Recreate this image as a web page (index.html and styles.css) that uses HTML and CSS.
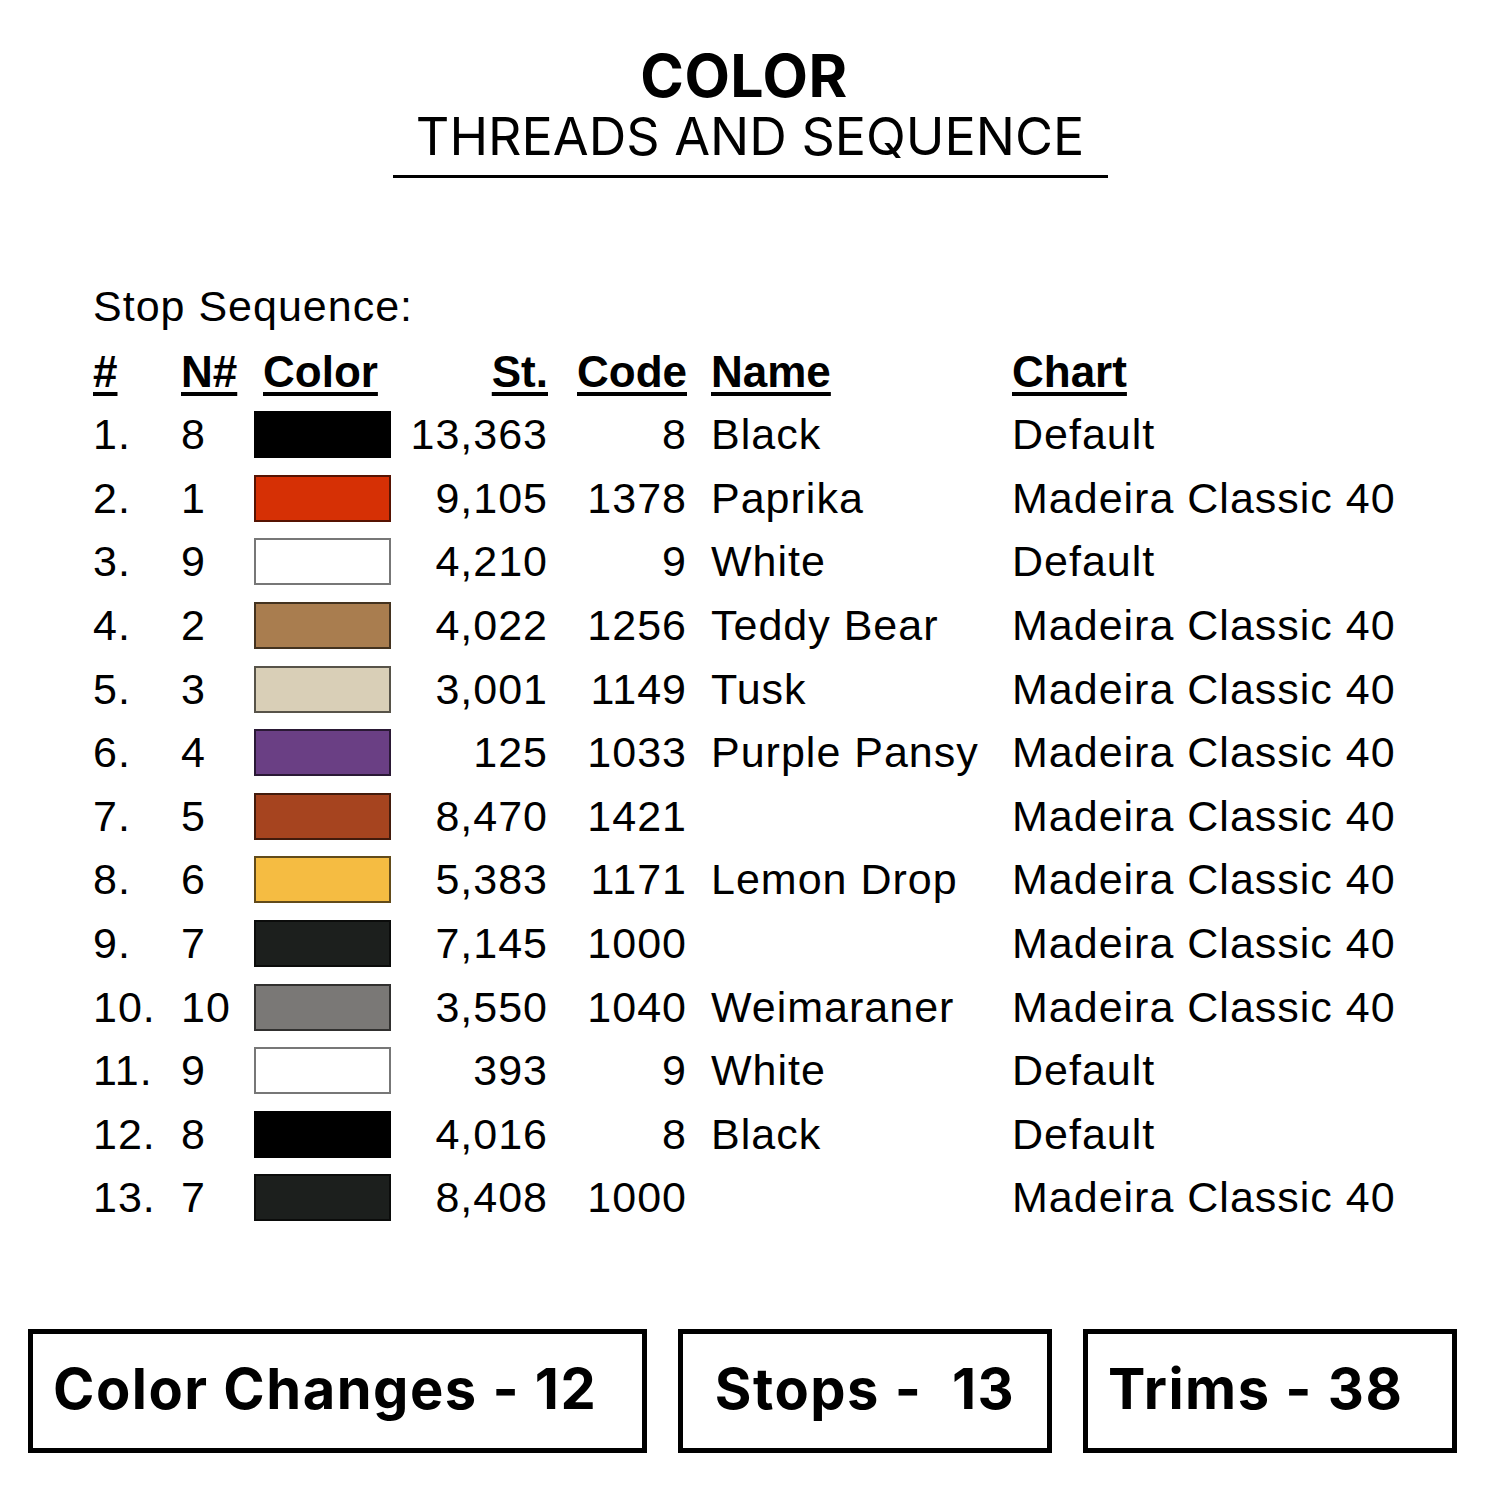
FILE: index.html
```html
<!DOCTYPE html>
<html lang="en">
<head>
<meta charset="utf-8">
<title>Color Threads and Sequence</title>
<link rel="stylesheet" href="styles.css">
</head>
<body>
<div class="page">
  <header class="title">
    <div class="title-main">COLOR</div>
    <div class="title-sub">THREADS AND SEQUENCE</div>
    <div class="title-rule"></div>
  </header>

  <section class="sequence">
    <div class="seq-label">Stop Sequence:</div>
    <div class="seq-table">
      <div class="hd"><span>#</span></div>
      <div class="hd"><span>N#</span></div>
      <div class="hd hd-color"><span>Color</span></div>
      <div class="hd num"><span>St.</span></div>
      <div class="hd num"><span>Code</span></div>
      <div class="hd name"><span>Name</span></div>
      <div class="hd"><span>Chart</span></div>

      <div>1.</div><div>8</div><div><i class="sw" style="background:#000"></i></div><div class="num">13,363</div><div class="num">8</div><div class="name">Black</div><div>Default</div>
      <div>2.</div><div>1</div><div><i class="sw" style="background:#d63005"></i></div><div class="num">9,105</div><div class="num">1378</div><div class="name">Paprika</div><div>Madeira Classic 40</div>
      <div>3.</div><div>9</div><div><i class="sw sw-light" style="background:#fff"></i></div><div class="num">4,210</div><div class="num">9</div><div class="name">White</div><div>Default</div>
      <div>4.</div><div>2</div><div><i class="sw" style="background:#a97d4f"></i></div><div class="num">4,022</div><div class="num">1256</div><div class="name">Teddy Bear</div><div>Madeira Classic 40</div>
      <div>5.</div><div>3</div><div><i class="sw" style="background:#d9cfb7"></i></div><div class="num">3,001</div><div class="num">1149</div><div class="name">Tusk</div><div>Madeira Classic 40</div>
      <div>6.</div><div>4</div><div><i class="sw" style="background:#6a3f84"></i></div><div class="num">125</div><div class="num">1033</div><div class="name">Purple Pansy</div><div>Madeira Classic 40</div>
      <div>7.</div><div>5</div><div><i class="sw" style="background:#a6441f"></i></div><div class="num">8,470</div><div class="num">1421</div><div class="name"></div><div>Madeira Classic 40</div>
      <div>8.</div><div>6</div><div><i class="sw" style="background:#f5bc42"></i></div><div class="num">5,383</div><div class="num">1171</div><div class="name">Lemon Drop</div><div>Madeira Classic 40</div>
      <div>9.</div><div>7</div><div><i class="sw" style="background:#1c1f1d"></i></div><div class="num">7,145</div><div class="num">1000</div><div class="name"></div><div>Madeira Classic 40</div>
      <div>10.</div><div>10</div><div><i class="sw" style="background:#7a7876"></i></div><div class="num">3,550</div><div class="num">1040</div><div class="name">Weimaraner</div><div>Madeira Classic 40</div>
      <div>11.</div><div>9</div><div><i class="sw sw-light" style="background:#fff"></i></div><div class="num">393</div><div class="num">9</div><div class="name">White</div><div>Default</div>
      <div>12.</div><div>8</div><div><i class="sw" style="background:#000"></i></div><div class="num">4,016</div><div class="num">8</div><div class="name">Black</div><div>Default</div>
      <div>13.</div><div>7</div><div><i class="sw" style="background:#1c1f1d"></i></div><div class="num">8,408</div><div class="num">1000</div><div class="name"></div><div>Madeira Classic 40</div>
    </div>
  </section>

  <footer class="stats">
    <div class="stat stat-wide">Color Changes - 12</div>
    <div class="stat stat-center">Stops -&nbsp; 13</div>
    <div class="stat">Trims - 38</div>
  </footer>
</div>
</body>
</html>
```

FILE: styles.css
```css
html, body {
  margin: 0;
  padding: 0;
  background: #fff;
}

.page {
  width: 1500px;
  height: 1500px;
  box-sizing: border-box;
  color: #000;
  font-family: "Liberation Sans", Arial, sans-serif;
  display: flex;
  flex-direction: column;
}

/* Title */
.title {
  display: flex;
  flex-direction: column;
  align-items: center;
  padding-top: 44px;
  font-family: Inter, "Open Sans", sans-serif;
}

.title-main {
  font-size: 59px;
  font-weight: 700;
  line-height: 64px;
  margin-left: -12px;
  letter-spacing: 0.5px;
}

.title-sub {
  font-size: 52px;
  font-weight: 400;
  line-height: 58px;
  letter-spacing: 0px;
}

.title-rule {
  width: 715px;
  height: 3px;
  background: #000;
  margin-top: 9px;
  margin-left: 1px;
}

/* Sequence table */
.sequence {
  padding-left: 93px;
  margin-top: 103px;
  font-size: 43px;
  letter-spacing: 1px;
}

.seq-label {
  line-height: 50px;
  margin-bottom: 16px;
}

.seq-table {
  display: grid;
  grid-template-columns: 88px 73px 137px 157px 139px 325px auto;
  grid-template-rows: 56px;
  grid-auto-rows: 63.6px;
  align-items: center;
}

.num {
  text-align: right;
}

.name {
  padding-left: 24px;
}

.hd {
  font-weight: 700;
  letter-spacing: 0;
  font-size: 44px;
  align-self: start;
  line-height: 50px;
}

.hd span {
  text-decoration: underline;
  text-decoration-thickness: 4px;
  text-underline-offset: 5px;
}

.hd-color {
  padding-left: 9px;
}

.sw {
  display: block;
  width: 137px;
  height: 47px;
  box-sizing: border-box;
  border: 2px solid rgba(0, 0, 0, 0.6);
}

.sw-light {
  border-color: #777;
}

/* Bottom stats */
.stats {
  display: flex;
  gap: 31px;
  padding-left: 28px;
  margin-top: 99px;
}

.stat {
  width: 374px;
  height: 124px;
  box-sizing: border-box;
  border: 5px solid #000;
  display: flex;
  align-items: center;
  padding-left: 20px;
  padding-bottom: 4px;
  font-family: Inter, "Open Sans", sans-serif;
  font-weight: 700;
  font-size: 56px;
  letter-spacing: 1.5px;
  white-space: pre;
}

.stat-wide {
  width: 619px;
}

.stat-center {
  justify-content: center;
  padding-left: 0;
}
```
